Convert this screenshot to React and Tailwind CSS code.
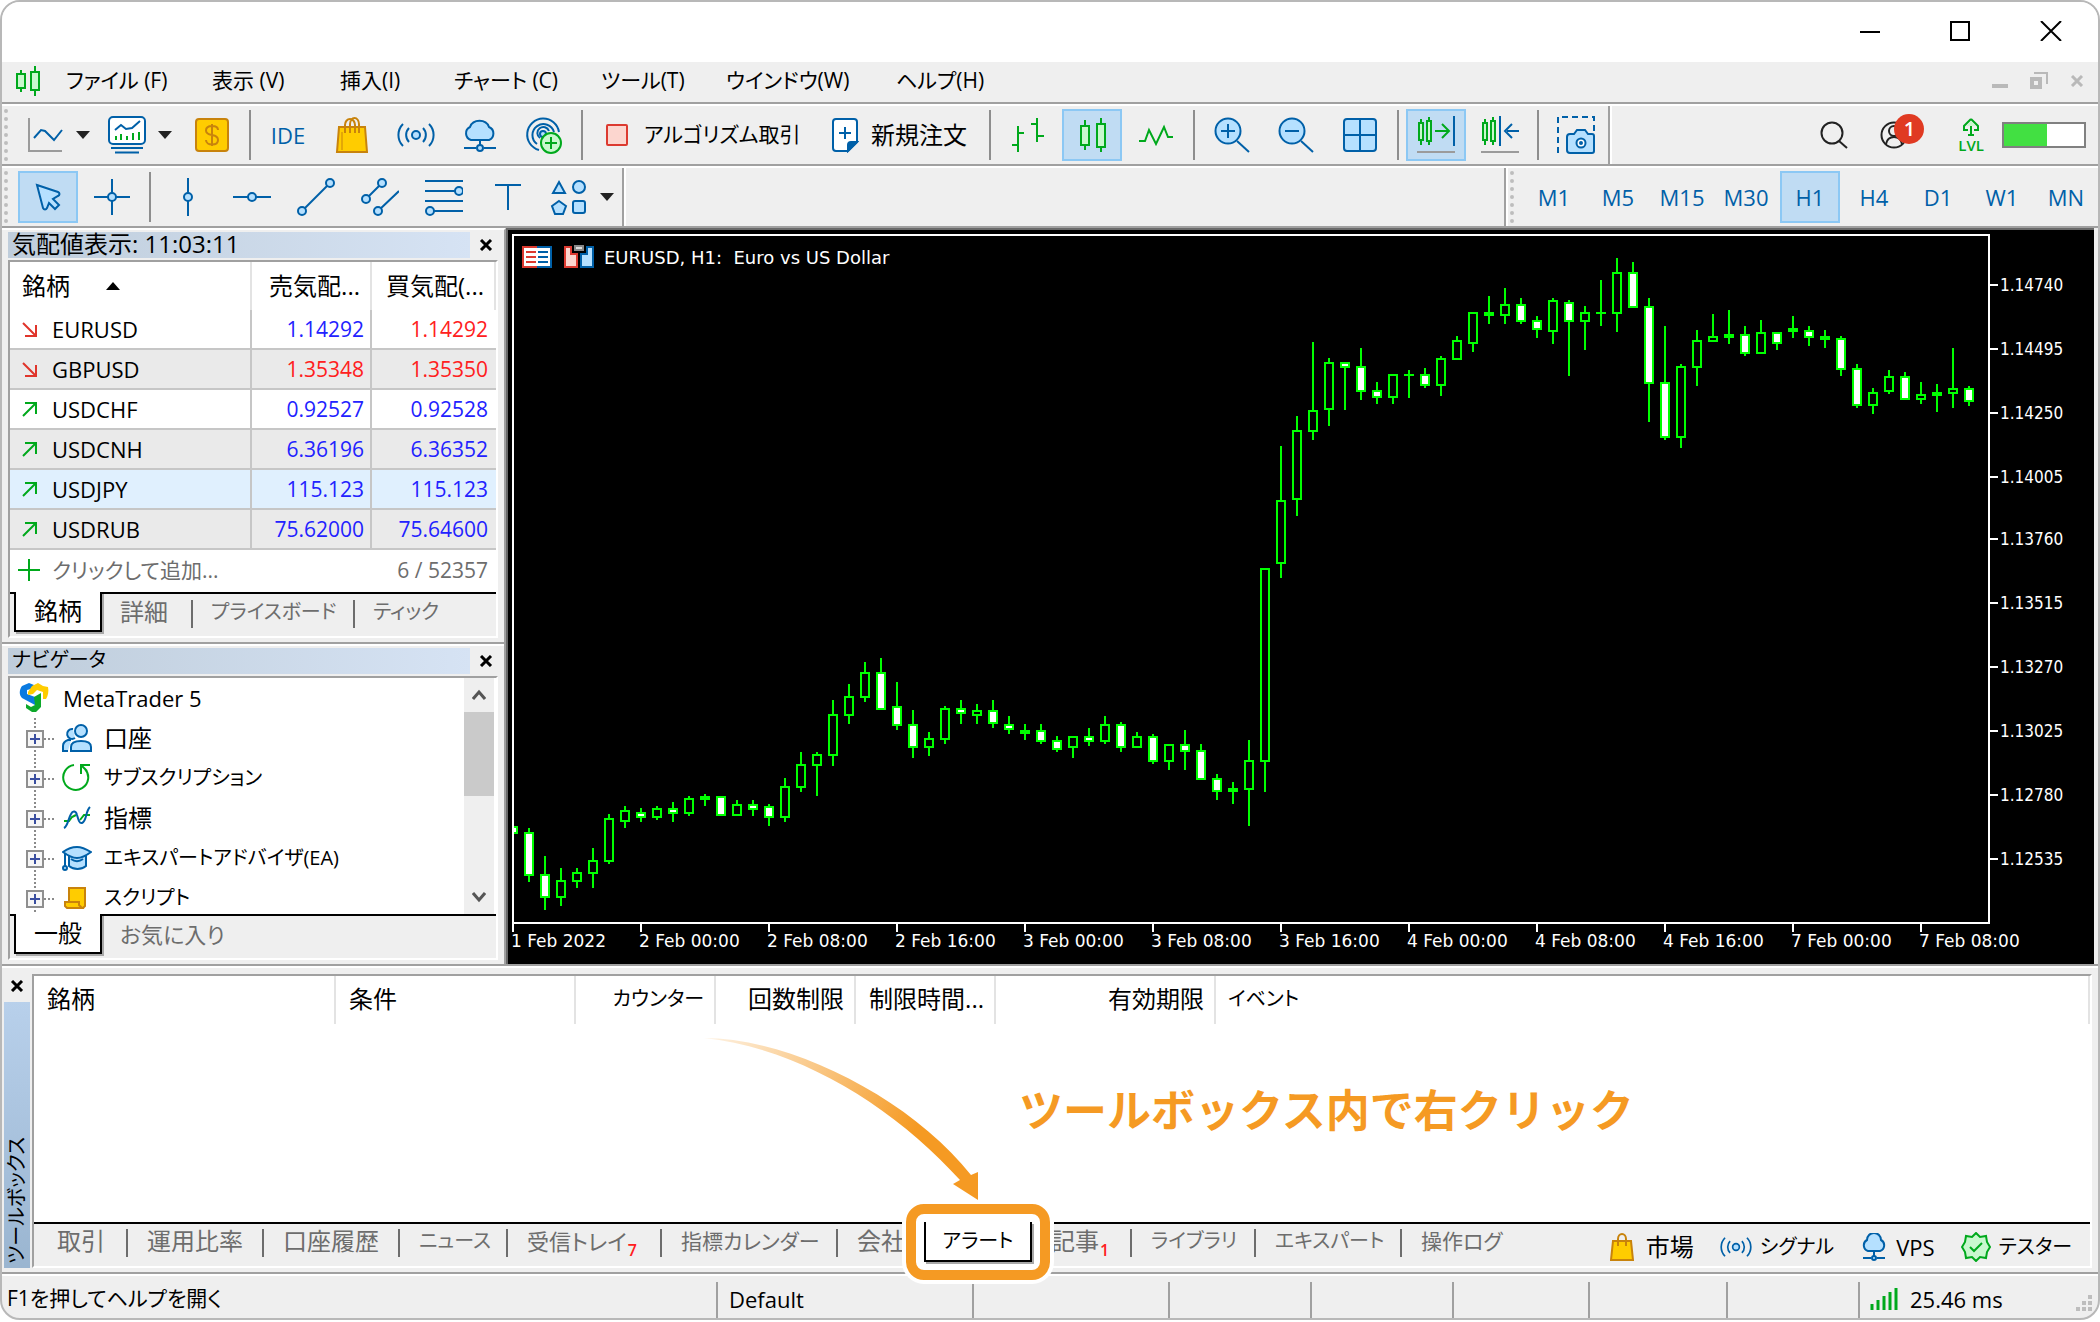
import React from "react";

const BLUE = "#0060a8";
const SKY = "#b5e0ff";
const GREEN = "#00a91c";
const MINT = "#c9f8ce";

const UI = "font-['Open_Sans','Noto_Sans_CJK_JP',sans-serif]";

/* ---------- icons ---------- */

function Icon({ w = 38, h = 38, children, className = "" }) {
  return (
    <svg
      width={w}
      height={h}
      viewBox={`0 0 ${w} ${h}`}
      fill="none"
      stroke={BLUE}
      strokeWidth="2"
      aria-hidden="true"
      className={`shrink-0 ${className}`}
    >
      {children}
    </svg>
  );
}

const Caret = () => (
  <svg width="14" height="8" viewBox="0 0 14 8" aria-hidden="true" className="shrink-0">
    <path d="M0 0h14L7 8z" fill="#222" />
  </svg>
);

const LineChartIcon = () => (
  <Icon>
    <path d="M3 2v33h33" stroke="#9b9b9b" />
    <path d="M8 22l7-8 4 1 9 9 8-10" />
  </Icon>
);

const TemplateIcon = () => (
  <Icon>
    <rect x="1" y="1" width="36" height="27" rx="4" fill="#fff" />
    <path d="M7 14l6-5 5 4 6-1 8-7" />
    <path d="M8 24v-4M13 24v-6M19 24v-4M25 24v-7M31 24v-8" stroke={GREEN} />
    <path d="M3 32h32M7 36.500h24" />
  </Icon>
);

const DollarIcon = () => (
  <Icon w={36} h={36}>
    <rect x="2" y="2" width="32" height="32" rx="3" fill="#ffcc00" stroke="#c8830c" />
    <path d="M18 7v22M24 13c0-3-3-4-6-4s-6 1-6 4.500 3 4 6 4.500 6 1.500 6 5-3 4.500-6 4.500-6-1.500-6-4.500" stroke="#c8830c" />
  </Icon>
);

const BagIcon = ({ size = 38 }) => (
  <svg width={size} height={size} viewBox="0 0 38 38" fill="none" strokeWidth="2" aria-hidden="true" className="shrink-0">
    <path d="M6 11h26l2 25H4z" fill="#ffcc00" stroke="#c8830c" />
    <path d="M12 17V9a5 6 0 0 1 10 0v8M17 17V8a4.500 6 0 0 1 9 0v9" stroke="#c8830c" />
    <path d="M9 16v18" stroke="#c8830c" strokeWidth="1" />
  </svg>
);

const SmallBagIcon = () => (
  <svg width="24" height="28" viewBox="0 0 24 28" fill="none" strokeWidth="2" aria-hidden="true" className="shrink-0">
    <path d="M3 8h18l2 19H1z" fill="#ffcc00" stroke="#c8830c" />
    <path d="M8 13V6a4 5 0 0 1 8 0v7" stroke="#c8830c" />
  </svg>
);

const SignalIcon = ({ size = 38 }) => (
  <svg width={size} height={size} viewBox="0 0 38 38" fill="none" stroke={BLUE} strokeWidth="2" aria-hidden="true" className="shrink-0">
    <circle cx="19" cy="19" r="4" fill={SKY} />
    <path d="M12 12a10 10 0 0 0 0 14M26 12a10 10 0 0 1 0 14M6 8a15.500 15.500 0 0 0 0 22M32 8a15.500 15.500 0 0 1 0 22" />
  </svg>
);

const CloudIcon = ({ size = 38 }) => (
  <svg width={size} height={size} viewBox="0 0 38 38" fill="none" stroke={BLUE} strokeWidth="2" aria-hidden="true" className="shrink-0">
    <path d="M10 24a7 7 0 0 1-1-13 10 9 0 0 1 19 0 7 7 0 0 1 0 13z" fill={SKY} />
    <path d="M19 24v6M3 32h12M23 32h12" />
    <circle cx="19" cy="32" r="3" fill={SKY} />
  </svg>
);

const SmallCloudIcon = () => (
  <Icon w={28} h={28}>
    <path d="M8 18a6 6 0 0 1-1-11 7 7 0 0 1 14 0 6 6 0 0 1-1 11z" fill={SKY} />
    <path d="M14 18v6M3 25h8M17 25h8" />
    <circle cx="14" cy="25" r="2" fill={SKY} />
  </Icon>
);

const TargetIcon = () => (
  <Icon>
    <path d="M14 34A16 16 0 1 1 34 16M12 28A11 11 0 1 1 29 16M15 22a6 6 0 1 1 9-7" />
    <circle cx="18" cy="18" r="3" fill={SKY} />
    <circle cx="26" cy="27" r="10" fill={MINT} stroke={GREEN} />
    <path d="M26 21v12M20 27h12" stroke={GREEN} />
  </Icon>
);

const NewOrderIcon = () => (
  <Icon w={28} h={36}>
    <path d="M5 2h18a3 3 0 0 1 3 3v20l-9 9H5a3 3 0 0 1-3-3V5a3 3 0 0 1 3-3z" fill="#fff" />
    <path d="M26 25l-9 9v-6a3 3 0 0 1 3-3z" fill={BLUE} />
    <path d="M14 10v12M8 16h12" />
  </Icon>
);

const BarsIcon = () => (
  <Icon>
    <path d="M3 29h6M9 10v26M9 17h6M22 8h6M28 2v24M28 20h7" stroke={GREEN} />
  </Icon>
);

const CandlesIcon = () => (
  <Icon>
    <path d="M12 4v30M28 2v34" stroke={GREEN} />
    <rect x="8" y="10" width="8" height="19" fill={MINT} stroke={GREEN} />
    <rect x="24" y="8" width="8" height="23" fill={MINT} stroke={GREEN} />
  </Icon>
);

const MenuCandlesIcon = () => (
  <Icon w={26} h={32}>
    <path d="M5 5v22M19 1v30" stroke={GREEN} />
    <rect x="1" y="9" width="8" height="14" fill={MINT} stroke={GREEN} />
    <rect x="15" y="7" width="8" height="18" fill={MINT} stroke={GREEN} />
  </Icon>
);

const ZigzagIcon = () => (
  <Icon>
    <path d="M2 25h6l4-11 7 14 8-17 4 10h5" stroke={GREEN} />
  </Icon>
);

const ZoomIcon = ({ plus }) => (
  <Icon>
    <path d="M24 25l12 11" />
    <circle cx="15" cy="15" r="12.500" fill={SKY} />
    <path d={plus ? "M15 8v14M8 15h14" : "M8 15h14"} />
  </Icon>
);

const GridIcon = () => (
  <Icon w={36} h={36}>
    <rect x="2" y="2" width="32" height="32" rx="3" fill={SKY} />
    <path d="M18 2v32M2 18h32" />
  </Icon>
);

const MiniCandles = () => (
  <g stroke={GREEN}>
    <path d="M4 3v26M12 1v28" />
    <rect x="2" y="7" width="4" height="17" fill={MINT} />
    <rect x="10" y="5" width="4" height="20" fill={MINT} />
  </g>
);

const ScrollEndIcon = () => (
  <Icon>
    <MiniCandles />
    <path d="M18 15h13M25 8l7 7-7 7" stroke={GREEN} />
    <path d="M37 0v30" />
    <path d="M0 36h38" stroke="#9b9b9b" />
  </Icon>
);

const ShiftIcon = () => (
  <Icon>
    <MiniCandles />
    <path d="M19 0v30M38 15H26M31 8l-7 7 7 7" />
    <path d="M0 36h38" stroke="#9b9b9b" />
  </Icon>
);

const CameraIcon = () => (
  <Icon w={40} h={40}>
    <path d="M2 38V2h36v16" strokeDasharray="6 4" />
    <path d="M14 19h4l3-4h8l3 4h4a2 2 0 0 1 2 2v15a2 2 0 0 1-2 2H14a3 3 0 0 1-3-3V22a3 3 0 0 1 3-3z" fill={SKY} />
    <circle cx="25" cy="28" r="4.500" fill="#fff" />
    <circle cx="25" cy="28" r="1" />
  </Icon>
);

const SearchIcon = () => (
  <Icon w={28} h={28}>
    <g stroke="#222">
      <circle cx="12" cy="12" r="10.500" />
      <path d="M19 20l8 7" />
    </g>
  </Icon>
);

const AccountIcon = () => (
  <Icon w={28} h={28}>
    <g stroke="#222">
      <circle cx="14" cy="14" r="12.500" />
      <circle cx="14" cy="10" r="5" />
      <path d="M6 23c1-5 4-7 8-7s7 2 8 7" />
    </g>
  </Icon>
);

const LevelIcon = () => (
  <Icon w={24} h={20}>
    <path d="M12 2l7 7v4h-4M12 2L5 9v4h4M12 7v10M9 18h6" stroke={GREEN} />
    <path d="M12 4l5 5H7z" fill={MINT} stroke="none" />
  </Icon>
);

const PointerIcon = () => (
  <Icon w={30} h={30}>
    <path d="M4 3l21 7c2 1 2 3 0 4l-5 3 6 6-4 4-6-6-2 5c-1 2-3 2-4 0z" fill={SKY} />
  </Icon>
);

const CrossIcon = () => (
  <Icon>
    <path d="M19 1v36M1 19h36" />
    <circle cx="19" cy="19" r="4" fill={SKY} />
  </Icon>
);

const VLineIcon = () => (
  <Icon>
    <path d="M19 0v38" />
    <circle cx="19" cy="19" r="4" fill={SKY} />
  </Icon>
);

const HLineIcon = () => (
  <Icon>
    <path d="M0 19h38" />
    <circle cx="19" cy="19" r="4" fill={SKY} />
  </Icon>
);

const TrendIcon = () => (
  <Icon>
    <path d="M6 32L33 5" />
    <circle cx="5" cy="33" r="4" fill={SKY} />
    <circle cx="33" cy="5" r="4" fill={SKY} />
  </Icon>
);

const ChannelIcon = () => (
  <Icon>
    <path d="M5 21L21 5M17 33l21-20" />
    <circle cx="5" cy="21" r="4" fill={SKY} />
    <circle cx="21" cy="5" r="4" fill={SKY} />
    <circle cx="17" cy="33" r="4" fill={SKY} />
  </Icon>
);

const FiboIcon = () => (
  <Icon>
    <path d="M0 3h38M0 13h34M0 23h38M4 33h34" />
    <circle cx="34" cy="13" r="4" fill={SKY} />
    <circle cx="5" cy="33" r="4" fill={SKY} />
  </Icon>
);

const TextIcon = () => (
  <Icon w={28} h={38}>
    <path d="M1 7h26M14 7v25" />
  </Icon>
);

const ShapesIcon = () => (
  <Icon>
    <g fill={SKY}>
      <path d="M9 4l6 11H3z" />
      <circle cx="29" cy="9" r="6" />
      <path d="M9 23l7 5-3 8H5l-3-8z" />
      <rect x="23" y="23" width="12" height="12" rx="2" />
    </g>
  </Icon>
);

const SmallX = ({ color = "#000" }) => (
  <svg width="14" height="12" viewBox="0 0 14 12" aria-hidden="true">
    <path d="M2 1l10 10M12 1L2 11" stroke={color} strokeWidth="3" />
  </svg>
);

const MetaIcon = () => (
  <svg width="30" height="30" viewBox="0 0 30 30" aria-hidden="true" className="shrink-0">
    <path d="M3 3l7-3 5 2-3 4-4 1v4l8 3v8L3 15c-3-3-3-8 0-12z" fill="#0a7ae0" />
    <path d="M9 9l4-6 6-3 5 3 5 1c1 4 0 9-2 12h-3V9l-6-2-4 4-5 1z" fill="#ffcc00" />
    <path d="M15 14l7-4v14l-5 5h-4l-6-4v-4l5 3 4-2z" fill="#0da82a" />
  </svg>
);

const AccountsIcon = () => (
  <Icon w={30} h={30}>
    <g fill={SKY}>
      <path d="M11 6a5 5 0 1 0 2 9" />
      <path d="M6 28H1v-5c0-3 2-5 5-6h3" />
      <circle cx="19" cy="8" r="6" />
      <path d="M9 28v-4c0-4 3-6 10-6s10 2 10 6v4z" />
    </g>
  </Icon>
);

const SubscriptionIcon = () => (
  <Icon w={30} h={30}>
    <path d="M12 2A12.500 12.500 0 1 0 23 6M19 11V2h9M19 2l6 6" stroke={GREEN} />
  </Icon>
);

const IndicatorIcon = () => (
  <Icon w={30} h={30}>
    <path d="M2 18h5l3-4 4-2M18 17l4-5h6" stroke={GREEN} />
    <path d="M2 25c4-2 4-9 7-14 2-4 5-3 6 1 1 3 2 9 5 8 5-2 3-11 8-16" />
  </Icon>
);

const ExpertIcon = () => (
  <Icon w={30} h={30}>
    <path d="M7 12v11c5 4 12 4 17 0V12" fill={SKY} />
    <path d="M15 4c4 0 9 2 14 5-4 3-9 6-14 6S5 12 1 9c4-3 10-5 14-5z" fill={SKY} />
    <path d="M9 16c4 3 8 3 12 0M3 10v14" />
    <circle cx="3" cy="25" r="2" fill={SKY} />
  </Icon>
);

const ScriptIcon = () => (
  <Icon w={30} h={30}>
    <g fill="#ffcc00" stroke="#c8830c">
      <path d="M7 5h16v18l-2 2H7z" />
      <path d="M3 19h14v3l3 3H5l-2-2z" />
    </g>
  </Icon>
);

const TesterIcon = () => (
  <Icon w={30} h={30}>
    <path d="M15 1l4 4 6-1 1 6 3 5-3 5-1 6-6-1-4 4-4-4-6 1-1-6-3-5 3-5 1-6 6 1z" fill={MINT} stroke={GREEN} />
    <path d="M9 15l4 4 8-8" stroke={GREEN} />
  </Icon>
);

/* ---------- toolbar parts ---------- */

function ToolButton({ label, active, children }) {
  return (
    <button
      type="button"
      aria-label={label}
      aria-pressed={active || undefined}
      className={`mx-[2px] flex h-[52px] w-[60px] shrink-0 items-center justify-center ${
        active ? "border-2 border-[#8cc8f4] bg-[#c0dcf3]" : ""
      }`}
    >
      {children}
    </button>
  );
}

const Sep = () => <span className="mx-[5px] h-[50px] w-[2px] shrink-0 bg-[#8e8e8e]" />;
const EndSep = () => <span className="h-[58px] w-[4px] shrink-0 border-r-2 border-l-2 border-r-white border-l-[#a0a0a0]" />;
const Grip = () => <span className="mr-[8px] ml-[2px] h-[52px] w-[4px] shrink-0 border-r-4 border-dotted border-[#bdbdbd]" />;
const Rule = () => <div className="h-[4px] shrink-0 border-t-2 border-b-2 border-t-[#a0a0a0] border-b-white" />;

const MENU = [
  ["ファイル (F)", "w-[146px]"],
  ["表示 (V)", "w-[128px]"],
  ["挿入(I)", "w-[114px]"],
  ["チャート (C)", "w-[147px]"],
  ["ツール(T)", "w-[125px]"],
  ["ウインドウ(W)", "w-[170px]"],
  ["ヘルプ(H)", "w-[120px]"],
];

function TitleBar() {
  return (
    <header className="flex h-[60px] shrink-0 items-center justify-end gap-[70px] bg-white pr-[36px] pb-[2px]">
      <button type="button" aria-label="最小化">
        <svg width="20" height="20" viewBox="0 0 20 20"><path d="M0 11h20" stroke="#000" strokeWidth="2" /></svg>
      </button>
      <button type="button" aria-label="最大化">
        <svg width="20" height="20" viewBox="0 0 20 20"><path d="M1 1h18v18H1z" fill="none" stroke="#000" strokeWidth="2" /></svg>
      </button>
      <button type="button" aria-label="閉じる">
        <svg width="22" height="20" viewBox="0 0 22 20"><path d="M1 0l20 20M21 0L1 20" stroke="#000" strokeWidth="2" /></svg>
      </button>
    </header>
  );
}

function MenuBar() {
  return (
    <nav className="flex h-[40px] shrink-0 items-center pb-[2px] pl-[14px] text-[21px]">
      <MenuCandlesIcon />
      <div className="ml-[24px] flex flex-1">
        {MENU.map(([label, w]) => (
          <button key={label} type="button" className={`shrink-0 text-left whitespace-nowrap ${w}`}>
            {label}
          </button>
        ))}
      </div>
      <div className="flex items-center gap-[22px] pr-[14px]">
        <button type="button" aria-label="子ウインドウを最小化">
          <svg width="16" height="16" viewBox="0 0 16 16"><path d="M0 13h16" stroke="#b9b9b9" strokeWidth="4" /></svg>
        </button>
        <button type="button" aria-label="子ウインドウを元に戻す">
          <svg width="18" height="18" viewBox="0 0 18 18" fill="none" stroke="#b9b9b9">
            <path d="M4 1h13v11" strokeWidth="2" /><path d="M2 7h8v8H2z" strokeWidth="4" />
          </svg>
        </button>
        <button type="button" aria-label="子ウインドウを閉じる"><SmallX color="#b9b9b9" /></button>
      </div>
    </nav>
  );
}

function MainToolbar() {
  return (
    <div className="flex h-[58px] shrink-0 items-center">
      <Grip />
      <button type="button" aria-label="チャート" className="flex w-[82px] shrink-0 items-center gap-[12px] pl-[10px]"><LineChartIcon /><Caret /></button>
      <button type="button" aria-label="テンプレート" className="flex w-[82px] shrink-0 items-center gap-[12px] pl-[10px]"><TemplateIcon /><Caret /></button>
      <ToolButton label="取引"><DollarIcon /></ToolButton>
      <Sep />
      <ToolButton label="IDE"><span className="text-[22px] text-[#0060a8]">IDE</span></ToolButton>
      <ToolButton label="市場"><BagIcon /></ToolButton>
      <ToolButton label="シグナル"><SignalIcon /></ToolButton>
      <ToolButton label="VPS"><CloudIcon /></ToolButton>
      <ToolButton label="接続を追加"><TargetIcon /></ToolButton>
      <Sep />
      <button type="button" className="flex w-[226px] shrink-0 items-center gap-[16px] pl-[18px] text-[21px] whitespace-nowrap">
        <span className="h-[22px] w-[22px] shrink-0 rounded-[2px] border-2 border-[#dc3a30] bg-[#fcd6cf]" />
        アルゴリズム取引
      </button>
      <button type="button" className="flex w-[170px] shrink-0 items-center gap-[12px] pl-[17px] text-[24px] whitespace-nowrap">
        <NewOrderIcon />
        新規注文
      </button>
      <Sep />
      <ToolButton label="バーチャート"><BarsIcon /></ToolButton>
      <ToolButton label="ローソク足" active><CandlesIcon /></ToolButton>
      <ToolButton label="ラインチャート"><ZigzagIcon /></ToolButton>
      <Sep />
      <ToolButton label="ズームイン"><ZoomIcon plus /></ToolButton>
      <ToolButton label="ズームアウト"><ZoomIcon /></ToolButton>
      <ToolButton label="整列表示"><GridIcon /></ToolButton>
      <Sep />
      <ToolButton label="自動スクロール" active><ScrollEndIcon /></ToolButton>
      <ToolButton label="チャートシフト"><ShiftIcon /></ToolButton>
      <Sep />
      <ToolButton label="スクリーンショット"><CameraIcon /></ToolButton>
      <EndSep />
      <div className="flex flex-1 items-center justify-end pr-[12px]">
        <button type="button" aria-label="検索" className="mr-[32px]"><SearchIcon /></button>
        <button type="button" aria-label="アカウント" className="relative mr-[50px]">
          <AccountIcon />
          <span className="absolute -top-[7px] left-[14px] flex h-[30px] w-[30px] items-center justify-center rounded-full bg-[#e03a22] text-[20px] leading-none font-semibold text-white">1</span>
        </button>
        <div className="mr-[18px] flex flex-col items-center leading-none text-[#00a91c]">
          <LevelIcon />
          <span className="text-[15px] leading-[16px] font-semibold">LVL</span>
        </div>
        <div role="meter" aria-label="レベル" aria-valuenow={54} className="h-[26px] w-[84px] border-2 border-[#808080] bg-white">
          <div className="h-full w-[54%] bg-[#42e042]" />
        </div>
      </div>
    </div>
  );
}

const FRAMES = ["M1", "M5", "M15", "M30", "H1", "H4", "D1", "W1", "MN"];

function DrawingToolbar() {
  return (
    <div className="flex h-[58px] shrink-0 items-center">
      <Grip />
      <ToolButton label="カーソル" active><PointerIcon /></ToolButton>
      <ToolButton label="十字カーソル"><CrossIcon /></ToolButton>
      <Sep />
      <ToolButton label="垂直線"><VLineIcon /></ToolButton>
      <ToolButton label="水平線"><HLineIcon /></ToolButton>
      <ToolButton label="トレンドライン"><TrendIcon /></ToolButton>
      <ToolButton label="チャネル"><ChannelIcon /></ToolButton>
      <ToolButton label="フィボナッチ"><FiboIcon /></ToolButton>
      <ToolButton label="テキスト"><TextIcon /></ToolButton>
      <button type="button" aria-label="図形" className="flex w-[82px] shrink-0 items-center gap-[12px] pl-[10px]"><ShapesIcon /><Caret /></button>
      <EndSep />
      <div className="flex flex-1 items-center justify-end text-[22px] text-[#0060a8]">
        <EndSep />
        <Grip />
        {FRAMES.map((f) => (
          <ToolButton key={f} label={f} active={f === "H1"}>{f}</ToolButton>
        ))}
      </div>
    </div>
  );
}

/* ---------- docked panels ---------- */

const QUOTES = [
  ["EURUSD", false, "1.14292", "text-[#2222ff]", "1.14292", "text-[#ff2020]", "bg-white"],
  ["GBPUSD", false, "1.35348", "text-[#ff2020]", "1.35350", "text-[#ff2020]", "bg-[#eaeaea]"],
  ["USDCHF", true, "0.92527", "text-[#2222ff]", "0.92528", "text-[#2222ff]", "bg-white"],
  ["USDCNH", true, "6.36196", "text-[#2222ff]", "6.36352", "text-[#2222ff]", "bg-[#eaeaea]"],
  ["USDJPY", true, "115.123", "text-[#2222ff]", "115.123", "text-[#2222ff]", "bg-[#e0f0fe]"],
  ["USDRUB", true, "75.62000", "text-[#2222ff]", "75.64600", "text-[#2222ff]", "bg-[#eaeaea]"],
];

function PanelTitle({ size, children }) {
  return (
    <div className="mt-[2px] flex h-[26px] items-center">
      <h2 className={`h-[26px] w-[462px] shrink-0 bg-linear-to-r from-[#bfcddb] to-[#d6e3f4] pl-[4px] leading-[24px] whitespace-nowrap ${size}`}>{children}</h2>
      <button type="button" aria-label="閉じる" className="ml-[9px]"><SmallX /></button>
    </div>
  );
}

function DockTabs({ active, others }) {
  return (
    <div role="tablist" className="flex h-[44px] items-start border-t-2 border-black bg-[#efefef] pl-[4px] text-[#6d6d6d]">
      <button type="button" role="tab" aria-selected="true" className="-mt-[2px] h-[40px] w-[88px] border-2 border-t-0 border-black bg-white text-[24px] leading-[36px] text-black shadow-[2px_2px_0_#a8a8a8]">
        {active}
      </button>
      {others.map(([t, cls], i) => (
        <button
          key={t}
          type="button"
          role="tab"
          aria-selected="false"
          className={`mt-[6px] h-[28px] pl-[18px] text-left whitespace-nowrap ${cls} ${i ? "border-l-2 border-[#6d6d6d]" : ""}`}
        >
          <span className="block h-[28px] leading-[24px]">{t}</span>
        </button>
      ))}
    </div>
  );
}

function MarketWatch() {
  return (
    <section className="h-[412px] shrink-0 pr-[6px] pl-[6px]">
      <PanelTitle size="text-[24px]">気配値表示: 11:03:11</PanelTitle>
      <div className="mt-[2px] h-[378px] border-2 border-t-[#a0a0a0] border-r-white border-b-white border-l-[#a0a0a0] bg-white">
        <table className="w-full table-fixed border-separate border-spacing-0">
          <thead>
            <tr className="h-[48px] text-[24px] whitespace-nowrap">
              <th className="w-[242px] border-r-2 border-[#e3e3e3] p-0 pl-[12px] text-left font-normal">
                <span className="inline-flex items-center gap-[36px]">
                  銘柄
                  <svg width="14" height="8" viewBox="0 0 14 8" aria-hidden="true"><path d="M0 8h14L7 0z" /></svg>
                </span>
              </th>
              <th className="w-[120px] border-r-2 border-[#e3e3e3] p-0 pr-[10px] text-right font-normal">売気配...</th>
              <th className="border-r-2 border-[#e3e3e3] p-0 pr-[10px] text-right font-normal">買気配(...</th>
            </tr>
          </thead>
          <tbody>
            {QUOTES.map(([sym, up, bid, bc, ask, ac, bg]) => (
              <tr key={sym} className={`h-[40px] leading-[30px] ${bg}`}>
                <td className="border-r-2 border-b-2 border-[#c6c6c6] p-0 pl-[12px]">
                  <span className="flex items-center gap-[15px]">
                    <svg width="15" height="15" viewBox="0 0 15 15" fill="none" strokeWidth="2" aria-hidden="true">
                      {up ? (
                        <path d="M1 14L13 2M3 1h11v11" stroke={GREEN} />
                      ) : (
                        <path d="M1 1l12 12M14 3v11H3" stroke="#e0352b" />
                      )}
                    </svg>
                    {sym}
                  </span>
                </td>
                <td className={`border-r-2 border-b-2 border-[#c6c6c6] p-0 pr-[6px] text-right text-[21px] ${bc}`}>{bid}</td>
                <td className={`border-b-2 border-[#c6c6c6] p-0 pr-[8px] text-right text-[21px] ${ac}`}>{ask}</td>
              </tr>
            ))}
          </tbody>
        </table>
        <div className="flex h-[42px] items-center pr-[8px] pb-[2px] pl-[8px] text-[21px] leading-[30px] text-[#6d6d6d]">
          <svg width="22" height="22" viewBox="0 0 22 22" aria-hidden="true"><path d="M11 0v22M0 11h22" stroke={GREEN} strokeWidth="2" /></svg>
          <button type="button" className="ml-[12px] flex-1 text-left">クリックして追加...</button>
          <span>6 / 52357</span>
        </div>
        <DockTabs
          active="銘柄"
          others={[
            ["詳細", "w-[89px] text-[24px]"],
            ["プライスボード", "w-[162px] text-[20px]"],
            ["ティック", "w-[110px] text-[20px]"],
          ]}
        />
      </div>
    </section>
  );
}

const TREE = [
  ["口座", AccountsIcon, "text-[24px]"],
  ["サブスクリプション", SubscriptionIcon, "text-[20px]"],
  ["指標", IndicatorIcon, "text-[24px]"],
  ["エキスパートアドバイザ(EA)", ExpertIcon, "text-[20px]"],
  ["スクリプト", ScriptIcon, "text-[20px]"],
];

function Navigator() {
  return (
    <section className="flex flex-1 flex-col pr-[6px] pl-[6px]">
      <div className="-mx-[6px]"><Rule /></div>
      <PanelTitle size="text-[20px]">ナビゲータ</PanelTitle>
      <div className="mt-[2px] h-[284px] border-2 border-t-[#a0a0a0] border-r-white border-b-white border-l-[#a0a0a0] bg-white">
        <div className="flex h-[236px]">
          <ul className="flex-1 overflow-hidden leading-[38px]">
            <li className="flex h-[40px] items-center gap-[14px] pl-[9px]"><MetaIcon />MetaTrader 5</li>
            {TREE.map(([label, Ico, size]) => (
              <li key={label} className={`flex h-[40px] items-center pl-[16px] ${size}`}>
                <svg width="32" height="40" viewBox="0 0 32 40" aria-hidden="true" className="shrink-0">
                  <path d="M9 0v40" stroke="#8a8a8a" strokeWidth="2" strokeDasharray="2 2" />
                  <path d="M18 21h12" stroke="#8a8a8a" strokeWidth="2" strokeDasharray="2 2" />
                  <rect x="1" y="13" width="16" height="16" fill="#f6f6f6" stroke="#8f8f8f" strokeWidth="2" />
                  <path d="M9 16v10M4 21h10" stroke="#3a4ea0" strokeWidth="2" />
                </svg>
                <span className="ml-[4px] flex items-center gap-[12px]"><Ico />{label}</span>
              </li>
            ))}
          </ul>
          <div className="flex w-[32px] flex-col items-center border-r-2 border-white bg-[#efefef]">
            <button type="button" aria-label="上へスクロール" className="flex h-[34px] items-center">
              <svg width="14" height="12" viewBox="0 0 14 12"><path d="M1 10l6-7 6 7" fill="none" stroke="#555" strokeWidth="3" /></svg>
            </button>
            <div className="h-[84px] w-[30px] bg-[#cacaca]" />
            <button type="button" aria-label="下へスクロール" className="mt-auto flex h-[34px] items-center">
              <svg width="14" height="12" viewBox="0 0 14 12"><path d="M1 2l6 7 6-7" fill="none" stroke="#555" strokeWidth="3" /></svg>
            </button>
          </div>
        </div>
        <DockTabs active="一般" others={[["お気に入り", "w-[140px] text-[22px]"]]} />
      </div>
    </section>
  );
}

/* ---------- chart ---------- */

/* high, body top, body bottom, low, bearish; measured downwards in chart units */
const CANDLES = [
  [1251,1251,1266,1266,1],[1254,1263,1353,1365,1],[1312,1349,1398,1423,1],[1337,1362,1398,1414,0],[1337,1345,1366,1378,0],
  [1296,1320,1349,1378,0],[1226,1234,1325,1329,0],[1209,1217,1242,1254,0],[1213,1221,1234,1242,1],[1209,1213,1233,1238,0],
  [1201,1213,1225,1242,1],[1188,1192,1226,1230,0],[1184,1188,1196,1209,0],[1188,1188,1229,1229,1],[1197,1205,1229,1229,0],
  [1197,1205,1217,1230,1],[1205,1209,1234,1250,1],[1151,1168,1234,1242,0],[1098,1122,1172,1180,0],[1098,1102,1126,1188,0],
  [990,1019,1106,1126,0],[957,982,1023,1040,0],[912,933,986,994,0],[904,933,1011,1011,1],[953,1003,1044,1052,1],
  [1011,1040,1089,1110,1],[1056,1069,1089,1106,0],[1003,1007,1073,1081,0],[990,1007,1019,1040,1],[999,1011,1022,1040,0],
  [990,1011,1040,1048,1],[1023,1040,1052,1060,1],[1040,1052,1060,1073,0],[1040,1052,1077,1081,1],[1065,1073,1093,1098,1],
  [1065,1065,1089,1110,0],[1048,1065,1077,1085,1],[1023,1040,1077,1081,0],[1036,1040,1089,1098,1],[1056,1065,1089,1089,0],
  [1060,1065,1118,1122,1],[1081,1081,1118,1135,0],[1052,1081,1098,1135,1],[1081,1093,1155,1155,1],[1143,1151,1180,1197,1],
  [1159,1172,1180,1205,0],[1073,1114,1176,1250,0],[717,717,1118,1180,0],[466,577,710,739,0],[404,433,578,611,0],
  [252,392,437,454,0],[285,293,392,425,0],[293,293,305,392,1],[264,301,355,371,1],[334,351,367,380,1],
  [318,318,367,380,0],[309,318,322,367,0],[305,318,342,347,1],[281,285,342,363,0],[239,248,289,289,0],
  [190,190,256,272,0],[157,190,198,215,0],[140,173,198,215,0],[161,173,210,215,1],[198,206,227,243,1],
  [161,165,231,256,0],[165,169,210,322,1],[177,190,210,268,0],[124,190,194,219,0],[78,107,194,231,0],
  [87,107,182,182,1],[161,177,338,417,1],[219,334,450,454,1],[297,301,450,470,0],[227,248,305,342,0],
  [194,239,252,252,0],[186,235,243,256,0],[219,235,276,281,1],[206,231,276,276,0],[231,231,256,268,1],
  [198,223,231,243,0],[219,227,243,260,1],[227,239,248,264,0],[239,243,309,322,1],[297,305,384,388,1],
  [347,355,384,400,0],[309,322,355,359,0],[314,322,371,371,1],[334,359,371,380,0],[338,355,363,396,0],
  [264,347,359,388,0],[342,347,375,384,1],
];

const toY = (v) => Math.round((v * 0.4847 - 10) / 2) * 2;

const PRICES = [
  ["1.14740", 55], ["1.14495", 119], ["1.14250", 183], ["1.14005", 247], ["1.13760", 309],
  ["1.13515", 373], ["1.13270", 437], ["1.13025", 501], ["1.12780", 565], ["1.12535", 629],
];

const DATES = [
  "1 Feb 2022", "2 Feb 00:00", "2 Feb 08:00", "2 Feb 16:00", "3 Feb 00:00", "3 Feb 08:00",
  "3 Feb 16:00", "4 Feb 00:00", "4 Feb 08:00", "4 Feb 16:00", "7 Feb 00:00", "7 Feb 08:00",
];

function Candle({ i, data }) {
  const [hi, top, bottom, lo, bear] = data;
  const x = 5 + 16 * i;
  const [yh, yt, yb, yl] = [toY(hi), toY(top), toY(bottom), toY(lo)];
  const h = Math.max(yb - yt, 2);
  return (
    <g>
      <rect x={x - 1} y={yh} width="2" height={yl - yh} fill="#00ff00" />
      <rect x={x - 5} y={yt} width="10" height={h} fill="#00ff00" />
      {h > 4 && <rect x={x - 3} y={yt + 2} width="6" height={h - 4} fill={bear ? "#fff" : "#000"} />}
    </g>
  );
}

function Chart() {
  return (
    <main className="mr-[4px] min-w-0 flex-1 overflow-hidden border-t-2 border-l-2 border-[#696969] bg-black">
      <svg
        width="100%"
        height="734"
        role="img"
        aria-label="EURUSD, H1"
        shapeRendering="crispEdges"
        className="block font-['DejaVu_Sans',sans-serif]"
      >
        <clipPath id="plot"><rect x="6" y="6" width="1474" height="686" /></clipPath>
        <g clipPath="url(#plot)">
          {CANDLES.map((c, i) => <Candle key={i} i={i} data={c} />)}
        </g>
        <rect x="5" y="5" width="1476" height="688" fill="none" stroke="#fff" strokeWidth="2" />
        <g fill="#fff" fontSize="17" className="font-['DejaVu_Sans_Condensed','DejaVu_Sans',sans-serif]">
          {PRICES.map(([p, y]) => (
            <g key={p}>
              <rect x="1482" y={y - 1} width="8" height="2" />
              <text x="1492" y={y + 6}>{p}</text>
            </g>
          ))}
        </g>
        <g fill="#fff" fontSize="17">
          {DATES.map((d, i) => (
            <g key={d}>
              <rect x={4 + 128 * i} y="694" width="2" height="8" />
              <text x={3 + 128 * i} y="717">{d}</text>
            </g>
          ))}
        </g>
        <g>
          <rect x="14" y="16" width="15" height="22" fill="#dc3a30" />
          <rect x="29" y="16" width="15" height="22" fill={BLUE} />
          <rect x="16" y="18" width="26" height="18" fill="#fff" />
          <path d="M18 22h10M18 27h10M18 32h10" stroke="#dc3a30" strokeWidth="2" />
          <path d="M30 22h10M30 27h10M30 32h10" stroke={BLUE} strokeWidth="2" />
        </g>
        <g strokeWidth="2">
          <path d="M57 17h6v7h6v13H57z" fill="#fcd6cf" stroke="#dc3a30" />
          <path d="M85 17h-6v7h-6v13h12z" fill={SKY} stroke={BLUE} />
          <rect x="67" y="16" width="8" height="4" fill="#ddd" stroke="#888" />
        </g>
        <text x="96" y="34" fill="#fff" fontSize="18" xmlSpace="preserve">EURUSD, H1:  Euro vs US Dollar</text>
      </svg>
    </main>
  );
}

/* ---------- toolbox ---------- */

const COLUMNS = [
  ["銘柄", "w-[302px] pl-[13px] text-left text-[24px]"],
  ["条件", "w-[240px] pl-[13px] text-left text-[24px]"],
  ["カウンター", "w-[140px] pr-[10px] text-right text-[20px]"],
  ["回数制限", "w-[140px] pr-[10px] text-right text-[24px]"],
  ["制限時間...", "w-[140px] pr-[10px] text-right text-[24px]"],
  ["有効期限", "w-[220px] pr-[10px] text-right text-[24px]"],
  ["イベント", "pl-[12px] text-left text-[20px]"],
];

const TAB = "relative h-[28px] shrink-0 pl-[19px] text-left whitespace-nowrap";
const LINE = "border-l-2 border-[#6d6d6d]";
const COUNT = "relative top-[6px] ml-[1px] text-[16px] leading-none font-semibold text-[#ff2020]";

function Tab({ first, cls, count, children }) {
  return (
    <button type="button" role="tab" aria-selected="false" className={`${TAB} ${first ? "" : LINE} ${cls}`}>
      <span className="block h-[28px] leading-[24px]">
        {children}
        {count && <span className={COUNT}>{count}</span>}
      </span>
    </button>
  );
}

function ToolboxTabs() {
  return (
    <div className="flex h-[44px] border-t-2 border-black bg-[#efefef]">
      <div role="tablist" className="flex items-start pt-[5px] text-[#6d6d6d]">
        <Tab first cls="ml-[4px] w-[88px] text-[24px]">取引</Tab>
        <Tab cls="w-[136px] text-[24px]">運用比率</Tab>
        <Tab cls="w-[136px] text-[24px]">口座履歴</Tab>
        <Tab cls="w-[108px] text-[20px]">ニュース</Tab>
        <Tab cls="w-[154px] text-[22px]" count="7">受信トレイ</Tab>
        <Tab cls="w-[176px] text-[21px]">指標カレンダー</Tab>
        <Tab cls="w-[88px] text-[24px]">会社</Tab>
        <button
          type="button"
          role="tab"
          aria-selected="true"
          className="relative z-10 -mt-[7px] h-[40px] w-[108px] shrink-0 text-[20px] text-black"
        >
          <span className="absolute -inset-[18px] rounded-[18px] border-[10px] border-[#f59a23] bg-white shadow-[0_0_0_4px_#fff]" />
          <span className="relative flex h-full items-center justify-center border-2 border-t-0 border-black bg-white shadow-[2px_2px_0_#a8a8a8]">アラート</span>
        </button>
        <Tab first cls="w-[98px] text-[24px]" count="1">記事</Tab>
        <Tab cls="w-[124px] text-[20px]">ライブラリ</Tab>
        <Tab cls="w-[146px] text-[20px]">エキスパート</Tab>
        <Tab cls="w-[130px] text-[21px]">操作ログ</Tab>
      </div>
      <div className="flex flex-1 items-center justify-end gap-[26px] pt-[4px] pr-[18px] whitespace-nowrap">
        <button type="button" className="flex items-center gap-[12px] text-[24px] leading-[30px]"><SmallBagIcon />市場</button>
        <button type="button" className="flex items-center gap-[8px] text-[20px] leading-[30px]"><SignalIcon size={32} />シグナル</button>
        <button type="button" className="flex items-center gap-[8px] leading-[30px]"><SmallCloudIcon />VPS</button>
        <button type="button" className="flex items-center gap-[8px] text-[20px] leading-[30px]"><TesterIcon />テスター</button>
      </div>
    </div>
  );
}

function Toolbox() {
  return (
    <section className="flex flex-1 pt-[6px]">
      <div className="flex w-[30px] flex-col items-center pt-[6px]">
        <button type="button" aria-label="閉じる"><SmallX /></button>
        <h2 className="mt-[10px] mb-[4px] flex w-[26px] flex-1 rotate-180 items-center justify-start bg-linear-to-t from-[#b8d0eb] to-[#9ab5d0] pt-[4px] text-[20px] leading-[26px] whitespace-nowrap [text-orientation:sideways] [writing-mode:vertical-rl]">
          ツールボックス
        </h2>
      </div>
      <div className="relative mr-[6px] mb-[4px] flex flex-1 flex-col border-2 border-t-[#a0a0a0] border-r-white border-b-white border-l-[#a0a0a0] bg-white">
        <table className="w-full table-fixed border-separate border-spacing-0">
          <thead>
            <tr className="h-[48px] whitespace-nowrap">
              {COLUMNS.map(([c, cls]) => (
                <th key={c} className={`border-r-2 border-[#e3e3e3] pt-0 pb-[2px] font-normal ${cls}`}>{c}</th>
              ))}
            </tr>
          </thead>
        </table>
        <div className="flex-1" />
        <svg width="290" height="170" viewBox="700 1034 290 170" aria-hidden="true" className="absolute top-[58px] left-[666px]">
          <defs>
            <linearGradient id="sweep" gradientUnits="userSpaceOnUse" x1="700" y1="1038" x2="910" y2="1140">
              <stop offset="0" stopColor="#f59a23" stopOpacity="0.1" />
              <stop offset="1" stopColor="#f59a23" />
            </linearGradient>
          </defs>
          <path d="M704 1038C790 1038 910 1098 971 1175L978 1172V1200L953 1184L960 1180C895 1108 800 1048 704 1038Z" fill="url(#sweep)" />
        </svg>
        <p className="absolute top-[104px] left-[985px] text-[44px] leading-[60px] font-bold whitespace-nowrap text-[#f59a23] [font-feature-settings:normal]">
          ツールボックス内で右クリック
        </p>
        <ToolboxTabs />
      </div>
    </section>
  );
}

const CELL = "h-[36px] shrink-0 border-l-2 border-[#a0a0a0]";

function StatusBar() {
  return (
    <footer className="flex h-[42px] shrink-0 items-end">
      <span className="flex h-[42px] w-[714px] items-center pt-[4px] pl-[5px] text-[21px] whitespace-nowrap">F1を押してヘルプを開く</span>
      <span className={`${CELL} flex w-[256px] items-center pb-[3px] pl-[11px] leading-[30px]`}>Default</span>
      <span className={`${CELL} w-[196px]`} />
      <span className={`${CELL} w-[142px]`} />
      <span className={`${CELL} w-[142px]`} />
      <span className={`${CELL} w-[136px]`} />
      <span className={`${CELL} w-[138px]`} />
      <span className={`${CELL} w-[132px]`} />
      <span className={`${CELL} flex flex-1 items-center gap-[12px] pb-[3px] pl-[10px] leading-[30px]`}>
        <svg width="28" height="22" viewBox="0 0 28 22" aria-hidden="true">
          <path d="M2 22v-6M8 22v-10M14 22v-14M20 22v-18M26 22V0" stroke={GREEN} strokeWidth="3" />
        </svg>
        25.46 ms
      </span>
      <svg width="20" height="20" viewBox="0 0 20 20" fill="#bdbdbd" aria-hidden="true" className="mr-[2px] mb-[3px]">
        <path d="M12 0h4v4h-4zM6 6h4v4H6zM12 6h4v4h-4zM0 12h4v4H0zM6 12h4v4H6zM12 12h4v4h-4z" />
      </svg>
    </footer>
  );
}

export default function App() {
  return (
    <div className={`flex min-h-screen flex-col bg-white pb-[2px] text-[22px] text-black [font-feature-settings:'palt'] ${UI}`}>
      <div className="flex flex-1 flex-col overflow-hidden rounded-[20px] border-2 border-[#b8b8b8] bg-[#efefef]">
        <TitleBar />
        <MenuBar />
        <Rule />
        <MainToolbar />
        <Rule />
        <DrawingToolbar />
        <div className="h-[2px] shrink-0 bg-[#a0a0a0]" />
        <div className="flex shrink-0">
          <aside className="flex w-[504px] shrink-0 flex-col border-t-2 border-r-2 border-t-white border-r-[#a0a0a0]">
            <MarketWatch />
            <Navigator />
          </aside>
          <Chart />
        </div>
        <Rule />
        <Toolbox />
        <Rule />
        <StatusBar />
      </div>
    </div>
  );
}
